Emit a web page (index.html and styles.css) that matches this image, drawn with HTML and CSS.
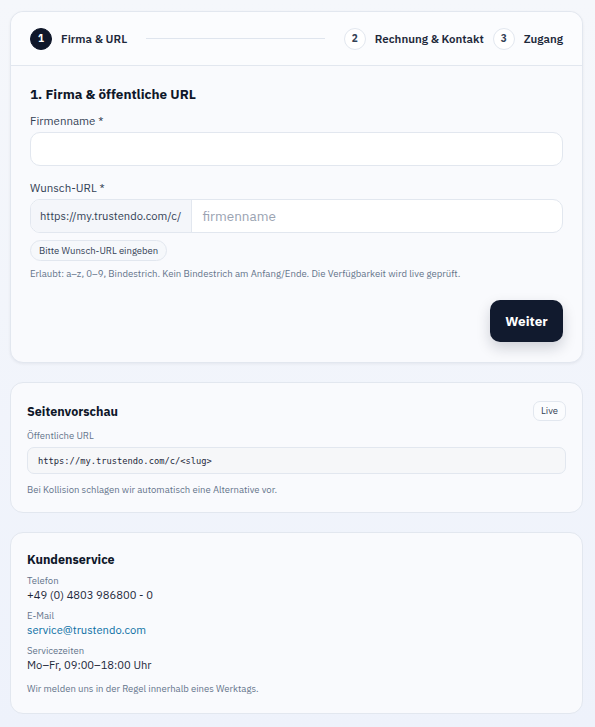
FILE: index.html
```html
<!DOCTYPE html>
<html lang="de">
<head>
<meta charset="utf-8">
<link rel="stylesheet" href="styles.css">
</head>
<body>
<main class="page">
  <section class="card wizard">
    <header class="steps">
      <div class="step active"><span class="num">1</span><span class="step-label">Firma &amp; URL</span></div>
      <div class="line"></div>
      <div class="step"><span class="num">2</span><span class="step-label">Rechnung &amp; Kontakt</span></div>
      <div class="step"><span class="num">3</span><span class="step-label">Zugang</span></div>
    </header>
    <div class="wizard-body">
      <h2 class="title">1. Firma &amp; öffentliche URL</h2>
      <label class="label">Firmenname *</label>
      <div class="input"></div>
      <label class="label label-2">Wunsch-URL *</label>
      <div class="group">
        <span class="prefix">https://my.trustendo.com/c/</span>
        <span class="group-input">firmenname</span>
      </div>
      <span class="pill">Bitte Wunsch-URL eingeben</span>
      <p class="help">Erlaubt: a–z, 0–9, Bindestrich. Kein Bindestrich am Anfang/Ende. Die Verfügbarkeit wird live geprüft.</p>
      <div class="actions"><button class="btn">Weiter</button></div>
    </div>
  </section>

  <section class="card side preview">
    <div class="side-head">
      <h3 class="side-title">Seitenvorschau</h3>
      <span class="badge">Live</span>
    </div>
    <div class="small s0">Öffentliche URL</div>
    <div class="code">https://my.trustendo.com/c/&lt;slug&gt;</div>
    <p class="note">Bei Kollision schlagen wir automatisch eine Alternative vor.</p>
  </section>

  <section class="card side service">
    <h3 class="side-title">Kundenservice</h3>
    <div class="small s1">Telefon</div>
    <div class="value">+49 (0) 4803 986800 - 0</div>
    <div class="small">E-Mail</div>
    <div class="value link">service@trustendo.com</div>
    <div class="small">Servicezeiten</div>
    <div class="value">Mo–Fr, 09:00–18:00 Uhr</div>
    <p class="note n2">Wir melden uns in der Regel innerhalb eines Werktags.</p>
  </section>
</main>
</body>
</html>
```

FILE: styles.css
```css
* { box-sizing: border-box; }
html, body { margin: 0; padding: 0; }
body {
  background: linear-gradient(180deg, #f5f7fb 0%, #eef2fb 100%);
  font-family: "IBM Plex Sans", Inter, "Noto Sans", sans-serif;
  color: #0f172a;
  min-height: 727px;
}
.page {
  padding: 11px 12px 15px 10px;
  display: flex;
  flex-direction: column;
  gap: 19px;
}
.card {
  background: #f9fafd;
  border: 1px solid #e2e7ef;
  border-radius: 13px;
}
.wizard { box-shadow: 0 1px 3px rgba(15, 23, 42, 0.06); }
.steps {
  height: 54px;
  border-bottom: 1px solid #e2e7ef;
  display: flex;
  align-items: center;
  padding: 0 19px 0 19px;
  gap: 9px;
  background: #fbfcfe;
  border-radius: 13px 13px 0 0;
}
.step { display: flex; align-items: center; gap: 9px; }
.num {
  width: 22px; height: 22px;
  border-radius: 50%;
  border: 1px solid #e2e7ef;
  background: #fff;
  display: flex; align-items: center; justify-content: center;
  font-size: 10px; font-weight: 700; color: #334155;
}
.step.active .num { background: #0f172a; border-color: #0f172a; color: #fff; }
.step-label { font-size: 11.5px; font-weight: 600; color: #1e293b; }
.line { flex: 1; height: 1px; background: #dfe5ee; margin: 0 10px; }
.wizard-body { padding: 19px 19px 20px 19px; }
.title { margin: 0; font-size: 13.5px; font-weight: 700; line-height: 18px; color: #0f172a; }
.label { display: block; font-size: 11.5px; color: #334155; margin-top: 10px; line-height: 16px; }
.label-2 { margin-top: 14px; }
.input {
  margin-top: 3px;
  height: 34px;
  background: #fff;
  border: 1px solid #e2e7ef;
  border-radius: 10px;
}
.group {
  margin-top: 3px;
  height: 34px;
  display: flex;
  border: 1px solid #e2e7ef;
  border-radius: 10px;
  overflow: hidden;
  background: #fff;
}
.prefix {
  display: flex; align-items: center;
  padding: 0 10px 0 9px;
  background: #f4f6fa;
  border-right: 1px solid #e2e7ef;
  font-size: 11.2px;
  color: #334155;
}
.group-input { display: flex; align-items: center; padding: 0 10px; font-size: 13.5px; color: #9aa3b2; }
.pill {
  display: inline-block;
  margin-top: 7px;
  padding: 0 8px;
  height: 21px;
  line-height: 19px;
  border: 1px solid #e2e7ef;
  border-radius: 11px;
  background: #f6f8fb;
  font-size: 9.5px;
  color: #334155;
}
.help { margin: 6px 0 0; font-size: 9.6px; color: #64748b; line-height: 14px; }
.actions { display: flex; justify-content: flex-end; margin-top: 19px; }
.btn {
  width: 73px; height: 42px;
  border: 0;
  border-radius: 10px;
  background: #111a2e;
  color: #fff;
  font-family: inherit;
  font-size: 13.5px;
  font-weight: 700;
  box-shadow: 0 6px 14px rgba(15, 23, 42, 0.18);
}
.side { padding: 16px; }
.preview { padding: 18px 16px 16px; }
.service { padding: 16px 16px 18px; }
.side-head { display: flex; justify-content: space-between; align-items: center; }
.side-title { margin: 0; font-size: 12.5px; font-weight: 700; line-height: 20px; color: #0f172a; }
.badge {
  height: 20px; padding: 0 7px;
  border: 1px solid #e2e7ef;
  border-radius: 7px;
  background: #fbfcfe;
  font-size: 9.5px; line-height: 18px; color: #334155;
}
.small { font-size: 9.5px; color: #64748b; line-height: 13px; margin-top: 6px; }
.side .small.s0 { margin-top: 8px; }
.side .small.s1 { margin-top: 5px; }
.code {
  margin-top: 5px;
  height: 27px;
  border: 1px solid #e2e7ef;
  border-radius: 7px;
  background: #f6f7f9;
  font-family: "DejaVu Sans Mono", monospace;
  font-size: 8.75px;
  color: #1e293b;
  display: flex; align-items: center;
  padding: 0 10px;
}
.note { margin: 9px 0 0; font-size: 9.5px; color: #64748b; line-height: 13px; }
.value { font-size: 11.2px; color: #1e293b; line-height: 15px; margin-top: 1px; }
.link { color: #0b6fa4; }
.n2 { margin-top: 9px; }
```
